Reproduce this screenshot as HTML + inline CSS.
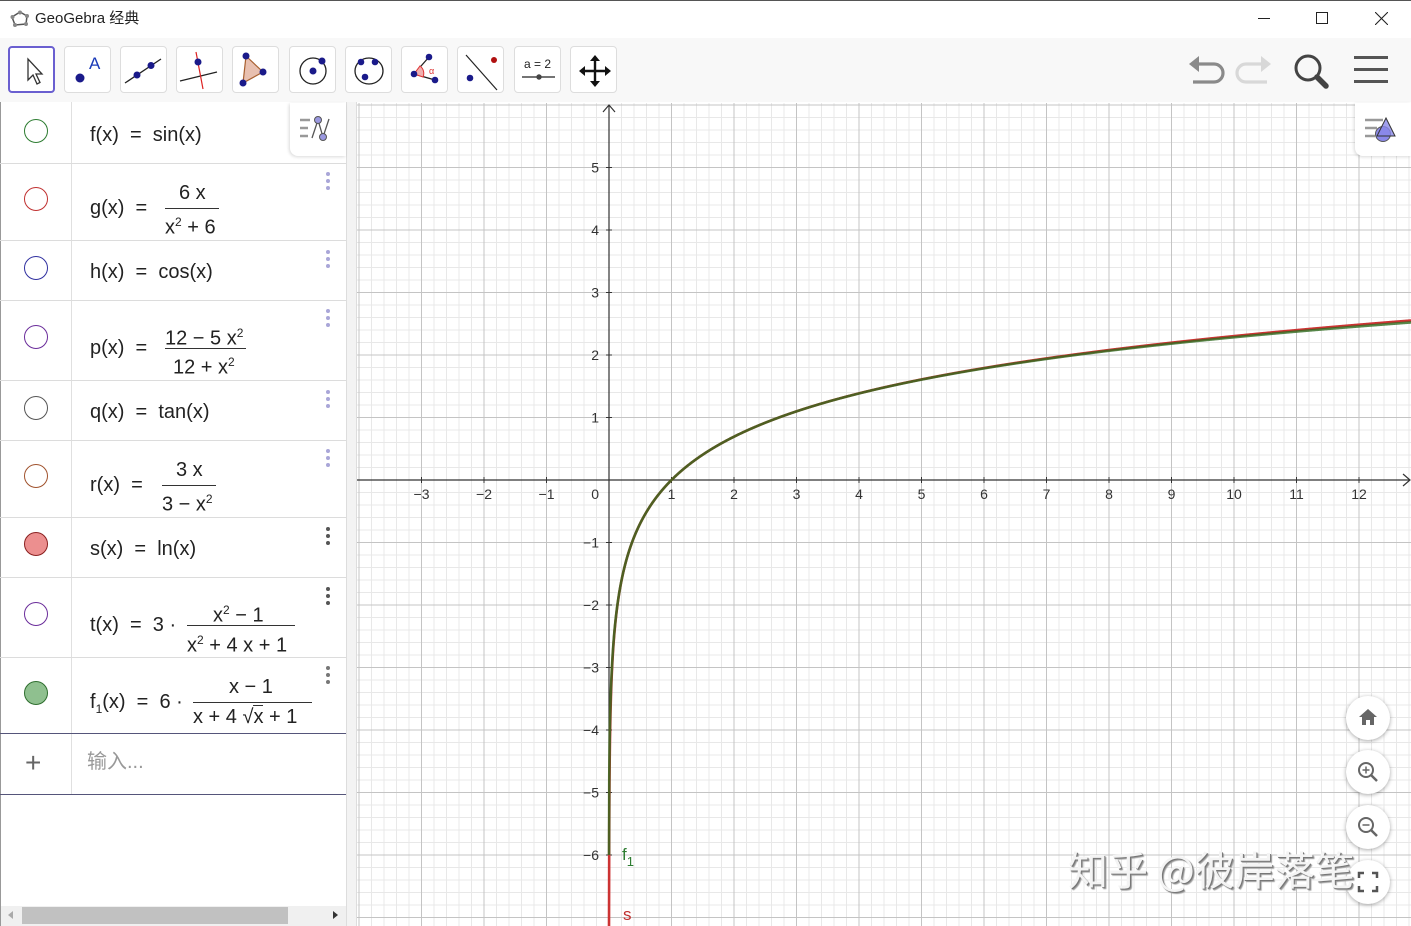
<!DOCTYPE html>
<html><head><meta charset="utf-8">
<style>
*{margin:0;padding:0;box-sizing:border-box}
body{width:1411px;height:926px;overflow:hidden;background:#fff;font-family:"Liberation Sans","Noto Sans CJK SC",sans-serif;position:relative;color:#222}
.a{position:absolute;white-space:pre;line-height:22px;font-size:20px}
.hl{position:absolute;background:#dcdcdc;height:1px}
.circ{position:absolute;width:24px;height:24px;border-radius:50%;border:1.3px solid}
.dots{position:absolute;left:326px;width:4px}
.dots i{display:block;width:4px;height:4px;border-radius:50%;background:#a9a6d8;margin-bottom:3px}
.bar{position:absolute;height:1.3px;background:#333}
.tb{position:absolute;top:46px;width:47px;height:47px;border:1px solid #ddd;border-radius:4px;background:#fff}
.zb{position:absolute;left:1346px;width:44px;height:44px;border-radius:50%;background:#fff;box-shadow:0 1px 4px rgba(0,0,0,.35)}
</style></head><body>
<div style="position:absolute;left:0;top:0;width:1411px;height:1px;background:#555"></div>
<svg style="position:absolute;left:10px;top:10px" width="20" height="18"><polygon points="10,2 17,6 16,14 5,15 2,7" fill="none" stroke="#555" stroke-width="1.5"/><circle cx="10" cy="2.5" r="2" fill="#888"/><circle cx="17" cy="6" r="2" fill="#888"/><circle cx="16" cy="14" r="2" fill="#888"/><circle cx="5" cy="15" r="2" fill="#888"/><circle cx="2.5" cy="7" r="2" fill="#888"/></svg>
<div class="a" style="left:35px;top:8px;font-size:15px">GeoGebra 经典</div>
<div style="position:absolute;left:1258px;top:18px;width:12px;height:1px;background:#222"></div>
<div style="position:absolute;left:1316px;top:12px;width:12px;height:12px;border:1px solid #222"></div>
<svg style="position:absolute;left:1375px;top:12px" width="13" height="13"><path d="M0 0L13 13M13 0L0 13" stroke="#222" stroke-width="1.1"/></svg>
<div style="position:absolute;left:0;top:38px;width:1411px;height:64px;background:#f8f8f8"></div>
<div class="tb" style="left:8px;border:2px solid #6a5fd0"><svg width="47" height="47"><path d="M18 11L18 32L23 27L27 36L30 34.5L26 26L32 26Z" fill="#fff" stroke="#333" stroke-width="1.3"/></svg></div>
<div class="tb" style="left:64px"><svg width="47" height="47"><circle cx="15" cy="31" r="4.5" fill="#1a1a8a"/><text x="24" y="22" font-family="Liberation Sans" font-size="17" fill="#1a3ab8">A</text></svg></div>
<div class="tb" style="left:120px"><svg width="47" height="47"><path d="M4 36L40 12" stroke="#222" stroke-width="1.3"/><circle cx="16" cy="28" r="3.5" fill="#1a1a8a"/><circle cx="30" cy="18.5" r="3.5" fill="#1a1a8a"/></svg></div>
<div class="tb" style="left:176px"><svg width="47" height="47"><path d="M3 34L40 25" stroke="#222" stroke-width="1.2"/><path d="M19 5L26 42" stroke="#d22" stroke-width="1.2"/><circle cx="21" cy="15" r="3.5" fill="#1a1a8a"/></svg></div>
<div class="tb" style="left:232px"><svg width="47" height="47"><polygon points="13,9 30,25 10,36" fill="#e8c0b0" stroke="#a86030" stroke-width="1.2"/><circle cx="13" cy="9" r="3.5" fill="#1a1a8a"/><circle cx="30" cy="25" r="3.5" fill="#1a1a8a"/><circle cx="10" cy="36" r="3.5" fill="#1a1a8a"/></svg></div>
<div class="tb" style="left:289px"><svg width="47" height="47"><circle cx="23" cy="24" r="13" fill="none" stroke="#222" stroke-width="1.3"/><circle cx="23" cy="24" r="3.5" fill="#1a1a8a"/><circle cx="32" cy="14" r="3.5" fill="#1a1a8a"/></svg></div>
<div class="tb" style="left:345px"><svg width="47" height="47"><ellipse cx="23" cy="24" rx="14" ry="13" fill="none" stroke="#222" stroke-width="1.3"/><circle cx="15" cy="15" r="3.3" fill="#1a1a8a"/><circle cx="29" cy="15" r="3.3" fill="#1a1a8a"/><circle cx="19" cy="30" r="3.3" fill="#1a1a8a"/></svg></div>
<div class="tb" style="left:401px"><svg width="47" height="47"><path d="M27 10L12 27L33 33" fill="none" stroke="#222" stroke-width="1.3"/><path d="M12 27L18 19A9 9 0 0 1 21 30Z" fill="#f0b0b0" stroke="#d33" stroke-width="1"/><text x="27" y="27" font-size="9" fill="#d33" font-family="Liberation Sans">α</text><circle cx="27" cy="10" r="3.3" fill="#1a1a8a"/><circle cx="12" cy="27" r="3.3" fill="#1a1a8a"/><circle cx="33" cy="33" r="3.3" fill="#1a1a8a"/></svg></div>
<div class="tb" style="left:457px"><svg width="47" height="47"><path d="M8 8L39 43" stroke="#222" stroke-width="1.2"/><circle cx="36" cy="13" r="3" fill="#b01010"/><circle cx="12" cy="31" r="3.3" fill="#1a1a8a"/></svg></div>
<div class="tb" style="left:514px"><svg width="47" height="47"><text x="9" y="21" font-size="12" font-family="Liberation Sans" fill="#222">a = 2</text><path d="M7 30H40" stroke="#222" stroke-width="1.2"/><circle cx="24" cy="30" r="2.7" fill="#444"/></svg></div>
<div class="tb" style="left:570px"><svg width="47" height="47"><path d="M24 10V38M10 24H38" stroke="#111" stroke-width="2.4"/><path d="M24 8L19 14H29ZM24 40L19 34H29ZM8 24L14 19V29ZM40 24L34 19V29Z" fill="#111"/></svg></div>
<svg style="position:absolute;left:1186px;top:54px" width="40" height="34"><path d="M12 10H28A9 9 0 0 1 28 28H7" fill="none" stroke="#8a8a8a" stroke-width="3.2"/><path d="M3 10L13 2V18Z" fill="#8a8a8a"/></svg>
<svg style="position:absolute;left:1234px;top:54px" width="40" height="34"><path d="M28 10H12A9 9 0 0 0 12 28H33" fill="none" stroke="#d8d8d8" stroke-width="3.2"/><path d="M37 10L27 2V18Z" fill="#d8d8d8"/></svg>
<svg style="position:absolute;left:1292px;top:52px" width="40" height="38"><circle cx="16" cy="16" r="12" fill="none" stroke="#444" stroke-width="3"/><path d="M25 25L34 34" stroke="#444" stroke-width="5.5" stroke-linecap="round"/></svg>
<div style="position:absolute;left:1354px;top:56px;width:34px;height:3.2px;background:#555;box-shadow:0 12px 0 #555,0 24px 0 #555"></div>
<div style="position:absolute;left:0;top:102px;width:1px;height:824px;background:#999"></div>
<div style="position:absolute;left:71px;top:102px;width:1px;height:692px;background:#e0e0e0"></div>
<div style="position:absolute;left:346px;top:102px;width:11px;height:824px;background:#f3f3f3;border-left:1px solid #ddd;border-right:1px solid #ddd"></div>
<div class="hl" style="left:0;top:163px;width:346px"></div>
<div class="hl" style="left:0;top:240px;width:346px"></div>
<div class="hl" style="left:0;top:300px;width:346px"></div>
<div class="hl" style="left:0;top:380px;width:346px"></div>
<div class="hl" style="left:0;top:440px;width:346px"></div>
<div class="hl" style="left:0;top:517px;width:346px"></div>
<div class="hl" style="left:0;top:577px;width:346px"></div>
<div class="hl" style="left:0;top:657px;width:346px"></div>
<div class="hl" style="left:0;top:733px;width:346px;background:#55557a"></div>
<div class="hl" style="left:0;top:794px;width:346px;background:#55557a"></div>
<div style="position:absolute;left:290px;top:103px;width:56px;height:53px;background:#fff;border-radius:0 0 0 8px;box-shadow:-1px 1px 3px rgba(0,0,0,.15)"><svg width="56" height="53"><path d="M10 17H20M10 25H18M10 33H18" stroke="#999" stroke-width="2.5"/><path d="M22 35L28 17L33 34L39 16" fill="none" stroke="#555" stroke-width="1.3"/><circle cx="28" cy="17" r="3.5" fill="#9a98e0" stroke="#555"/><circle cx="33" cy="34" r="3.5" fill="#9a98e0" stroke="#555"/></svg></div>
<div class="circ" style="left:24px;top:119px;border-color:#2e7d32"></div>
<div class="circ" style="left:24px;top:187px;border-color:#c03030"></div>
<div class="circ" style="left:24px;top:256px;border-color:#3030a0"></div>
<div class="circ" style="left:24px;top:325px;border-color:#6a2c9a"></div>
<div class="circ" style="left:24px;top:396px;border-color:#555"></div>
<div class="circ" style="left:24px;top:464px;border-color:#a0522d"></div>
<div class="circ" style="left:24px;top:532px;border-color:#8a2020;background:#ec8f8f"></div>
<div class="circ" style="left:24px;top:602px;border-color:#6a2c9a"></div>
<div class="circ" style="left:24px;top:681px;border-color:#2e6e2e;background:#8fc08f"></div>
<div class="dots" style="top:172px"><i></i><i></i><i></i></div>
<div class="dots" style="top:250px"><i></i><i></i><i></i></div>
<div class="dots" style="top:309px"><i></i><i></i><i></i></div>
<div class="dots" style="top:390px"><i></i><i></i><i></i></div>
<div class="dots" style="top:449px"><i></i><i></i><i></i></div>
<div class="dots" style="top:527px"><i style="background:#555"></i><i style="background:#555"></i><i style="background:#555"></i></div>
<div class="dots" style="top:587px"><i style="background:#555"></i><i style="background:#555"></i><i style="background:#555"></i></div>
<div class="dots" style="top:666px"><i style="background:#777"></i><i style="background:#777"></i><i style="background:#777"></i></div>
<div class="a" style="left:90px;top:124px">f(x)  =  sin(x)</div>
<div class="a" style="left:90px;top:197px">g(x)  =</div>
<div class="a" style="left:179px;top:182px">6 x</div><div class="bar" style="left:165px;top:208px;width:54px"></div><div class="a" style="left:165px;top:211px">x<sup style="font-size:12px">2</sup> + 6</div>
<div class="a" style="left:90px;top:261px">h(x)  =  cos(x)</div>
<div class="a" style="left:90px;top:337px">p(x)  =</div>
<div class="a" style="left:165px;top:322px">12 − 5 x<sup style="font-size:12px">2</sup></div><div class="bar" style="left:165px;top:348px;width:81px"></div><div class="a" style="left:173px;top:351px">12 + x<sup style="font-size:12px">2</sup></div>
<div class="a" style="left:90px;top:401px">q(x)  =  tan(x)</div>
<div class="a" style="left:90px;top:474px">r(x)  =</div>
<div class="a" style="left:176px;top:459px">3 x</div><div class="bar" style="left:162px;top:485px;width:54px"></div><div class="a" style="left:162px;top:488px">3 − x<sup style="font-size:12px">2</sup></div>
<div class="a" style="left:90px;top:538px">s(x)  =  ln(x)</div>
<div class="a" style="left:90px;top:614px">t(x)  =  3 ·</div>
<div class="a" style="left:213px;top:599px">x<sup style="font-size:12px">2</sup> − 1</div><div class="bar" style="left:187px;top:625px;width:108px"></div><div class="a" style="left:187px;top:629px">x<sup style="font-size:12px">2</sup> + 4 x + 1</div>
<div class="a" style="left:90px;top:691px">f<sub style="font-size:12px">1</sub>(x)  =  6 ·</div>
<div class="a" style="left:229px;top:676px">x − 1</div><div class="bar" style="left:193px;top:702px;width:119px"></div><div class="a" style="left:193px;top:706px">x + 4 √<span style="border-top:1.3px solid #333">x</span> + 1</div>
<div class="a" style="left:25px;top:749px;font-size:28px;color:#666;line-height:28px">+</div>
<div class="a" style="left:87px;top:751px;color:#999">输入...</div>
<div style="position:absolute;left:1px;top:906px;width:345px;height:20px;background:#f0f0f0"></div>
<div style="position:absolute;left:22px;top:907px;width:266px;height:17px;background:#c1c1c1"></div>
<div style="position:absolute;left:8px;top:911px;border:4px solid transparent;border-right:5px solid #aaa;border-left:0"></div>
<div style="position:absolute;left:333px;top:911px;border:4px solid transparent;border-left:5px solid #333;border-right:0"></div>
<svg id="g" style="position:absolute;left:357px;top:103px" width="1054" height="823"></svg>
<div style="position:absolute;left:1355px;top:103px;width:56px;height:53px;background:#fff;border-radius:0 0 0 8px;box-shadow:-1px 1px 3px rgba(0,0,0,.15)"><svg width="56" height="53"><path d="M10 17H28M10 25H22M10 33H20" stroke="#999" stroke-width="2.5"/><circle cx="28" cy="31" r="7.5" fill="#8a88e8" stroke="#555"/><path d="M31 15L40 33H22Z" fill="#8a88e8" fill-opacity=".8" stroke="#333"/></svg></div>
<div class="zb" style="top:696px"><svg width="44" height="44"><path d="M22 13L13 21H16V29H20V24H24V29H28V21H31Z" fill="#666"/></svg></div>
<div class="zb" style="top:750px"><svg width="44" height="44"><circle cx="20" cy="20" r="7" fill="none" stroke="#666" stroke-width="2"/><path d="M25 25L31 31" stroke="#666" stroke-width="2.5"/><path d="M20 16.5V23.5M16.5 20H23.5" stroke="#666" stroke-width="1.5"/></svg></div>
<div class="zb" style="top:805px"><svg width="44" height="44"><circle cx="20" cy="20" r="7" fill="none" stroke="#666" stroke-width="2"/><path d="M25 25L31 31" stroke="#666" stroke-width="2.5"/><path d="M16.5 20H23.5" stroke="#666" stroke-width="1.5"/></svg></div>
<div class="zb" style="top:860px"><svg width="44" height="44"><path d="M13 18V13H18M26 13H31V18M31 26V31H26M18 31H13V26" fill="none" stroke="#555" stroke-width="2.5"/></svg></div>
<div class="a" style="left:1068px;top:846px;font-size:40px;line-height:44px;color:#f4f4f4;text-shadow:1px 1px 0 #777,2px 2px 1px #999;font-family:'Noto Sans CJK SC',sans-serif">知乎 @彼岸落笔</div>
<script>
(function(){
var s=document.getElementById('g'),W=1054,H=823,ox=609-357,oy=480-103,u=62.5,h='';
function L(x1,y1,x2,y2,c,w){h+='<line x1="'+x1+'" y1="'+y1+'" x2="'+x2+'" y2="'+y2+'" stroke="'+c+'" stroke-width="'+(w||1)+'"/>';}
for(var i=-30;i<=100;i++){var x=ox+i*12.5;if(x<0||x>W)continue;if(i%5)L(x,0,x,H,'#e8e8e8');}
for(var i=-40;i<=40;i++){var y=oy+i*12.5;if(y<0||y>H)continue;if(i%5)L(0,y,W,y,'#e8e8e8');}
for(var i=-5;i<=20;i++){var x=ox+i*u;if(x<0||x>W||i==0)continue;L(x,0,x,H,'#c4c4c4');}
for(var i=-8;i<=8;i++){var y=oy+i*u;if(y<0||y>H||i==0)continue;L(0,y,W,y,'#c4c4c4');}
L(0,oy,W-1,oy,'#333',1.2);L(ox,2,ox,H,'#333',1.2);
h+='<path d="M'+(W-8)+' '+(oy-6)+'L'+(W-1)+' '+oy+'L'+(W-8)+' '+(oy+6)+'M'+(ox-6)+' 9L'+ox+' 2L'+(ox+6)+' 9" fill="none" stroke="#333" stroke-width="1.2"/>';
var T='<text font-family="Liberation Sans" font-size="14" fill="#333" ';
for(var i=-3;i<=12;i++){if(i==0)continue;var x=ox+i*u;h+=T+'x="'+x+'" y="'+(oy+19)+'" text-anchor="middle">'+(i<0?'−'+(-i):i)+'</text>';L(x,oy-3,x,oy+3,'#333');}
h+=T+'x="'+(ox-10)+'" y="'+(oy+19)+'" text-anchor="end">0</text>';
for(var i=-6;i<=5;i++){if(i==0)continue;var y=oy-i*u;h+=T+'x="'+(ox-10)+'" y="'+(y+5)+'" text-anchor="end">'+(i<0?'−'+(-i):i)+'</text>';L(ox-3,y,ox+3,y,'#333');}
function P(f){var d='',first=1;for(var px=0;px<=W-ox;px+=0.25){var x=px/u;if(x<=0)x=1e-9;var v=f(x),y=oy-v*u;if(y>H+5)y=H+5;if(y<-5)continue;d+=(first?'M':'L')+(ox+px).toFixed(2)+' '+y.toFixed(2);first=0;}return d;}
var ds=P(function(x){return Math.log(x)});
ds='M'+(ox+0.9)+' '+(H+5)+ds.replace(/^M/,'L');
var df=P(function(x){return 6*(x-1)/(x+4*Math.sqrt(x)+1)});
h+='<path d="'+ds+'" fill="none" stroke="#cc3333" stroke-width="2.6"/>';
h+='<path d="'+df+'" fill="none" stroke="#2e6a1e" stroke-opacity=".8" stroke-width="2.6"/>';
h+='<text font-family="Liberation Sans" font-size="17" fill="#2e7d32" x="'+(ox+13)+'" y="'+(oy+6*u+5)+'">f<tspan font-size="13" dy="6">1</tspan></text>';
h+='<text font-family="Liberation Sans" font-size="17" fill="#c03030" x="'+(ox+14)+'" y="'+(H-6)+'">s</text>';
s.innerHTML=h;
})();
</script>
</body></html>
